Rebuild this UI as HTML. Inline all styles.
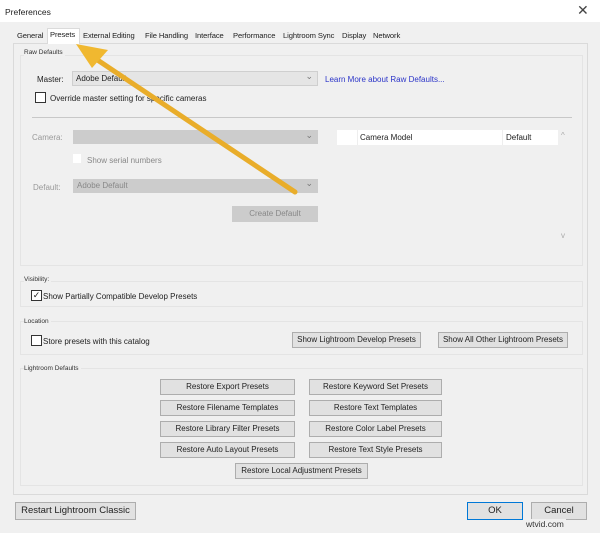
<!DOCTYPE html><html><head><style>
*{margin:0;padding:0;box-sizing:border-box}
body{width:600px;height:533px;background:#f0f0f0;font-family:"Liberation Sans",sans-serif;font-size:9px;color:#222;position:relative;overflow:hidden}
.a{position:absolute;white-space:nowrap}
.btn{position:absolute;background:#e1e1e1;border:1px solid #adadad;text-align:center;font-size:8px;line-height:14px;color:#222}
.grp{position:absolute;border:1px solid #e4e4e4;background:#f0f0f0}
.cb{position:absolute;width:11px;height:11px;border:1px solid #333;background:#fff}
.lbl{position:absolute;font-size:6.5px;color:#333;background:#f0f0f0;padding-right:2px}
.dd{position:absolute;background:#e5e5e5;border:1px solid #cfcfcf;font-size:8px;line-height:14px;padding-left:3px}
.dd:after{content:"⌄";position:absolute;right:4px;top:-3px;color:#777;font-size:9px}
.tab{position:absolute;top:31px;font-size:7.6px;letter-spacing:-0.1px}
</style></head><body>
<div class="a" style="left:0;top:0;width:600px;height:22px;background:#fff"></div>
<div class="a" style="left:5px;top:7px;font-size:8.5px">Preferences</div>
<div class="a" style="left:577px;top:2px;font-size:14px;color:#444">✕</div>
<div class="a" style="left:13px;top:43px;width:575px;height:452px;border:1px solid #dadada;background:#f0f0f0"></div>
<div class="a" style="left:47px;top:28px;width:33px;height:16px;background:#fff;border:1px solid #dadada;border-bottom:none"></div>
<div class="tab" style="left:17px">General</div>
<div class="tab" style="left:50px;top:30px">Presets</div>
<div class="tab" style="left:83px">External Editing</div>
<div class="tab" style="left:145px">File Handling</div>
<div class="tab" style="left:195px">Interface</div>
<div class="tab" style="left:233px">Performance</div>
<div class="tab" style="left:283px">Lightroom Sync</div>
<div class="tab" style="left:342px">Display</div>
<div class="tab" style="left:373px">Network</div>

<div class="grp" style="left:20px;top:55px;width:563px;height:211px"></div>
<div class="lbl" style="left:24px;top:49px">Raw Defaults</div>
<div class="a" style="left:37px;top:75px;font-size:8px">Master:</div>
<div class="dd" style="left:72px;top:71px;width:246px;height:15px">Adobe Default</div>
<div class="a" style="left:325px;top:75px;font-size:8px;color:#2b34c8">Learn More about Raw Defaults...</div>
<div class="cb" style="left:35px;top:92px"></div>
<div class="a" style="left:50px;top:94px;font-size:8px">Override master setting for specific cameras</div>
<div class="a" style="left:32px;top:117px;width:540px;height:1px;background:#c8c8c8"></div>
<div class="a" style="left:32px;top:133px;font-size:8px;color:#999">Camera:</div>
<div class="dd" style="left:73px;top:130px;width:245px;height:14px;background:#ccc;border-color:#ccc"></div>
<div class="cb" style="left:73px;top:154px;width:8px;height:9px;border:none"></div>
<div class="a" style="left:87px;top:156px;font-size:8px;color:#888">Show serial numbers</div>
<div class="a" style="left:33px;top:183px;font-size:8px;color:#999">Default:</div>
<div class="dd" style="left:73px;top:179px;width:245px;height:14px;background:#ccc;border-color:#ccc;color:#888;line-height:12px">Adobe Default</div>
<div class="btn" style="left:232px;top:206px;width:86px;height:16px;background:#ccc;border-color:#ccc;color:#888">Create Default</div>
<div class="a" style="left:337px;top:130px;width:221px;height:15px;background:#fff"></div>
<div class="a" style="left:357px;top:130px;width:1px;height:15px;background:#eee"></div>
<div class="a" style="left:502px;top:130px;width:1px;height:15px;background:#eee"></div>
<div class="a" style="left:360px;top:133px;font-size:8px">Camera Model</div>
<div class="a" style="left:506px;top:133px;font-size:8px">Default</div>
<div class="a" style="left:561px;top:131px;font-size:8px;color:#aaa">^</div>
<div class="a" style="left:561px;top:231px;font-size:8px;color:#aaa">v</div>

<div class="grp" style="left:20px;top:281px;width:563px;height:26px"></div>
<div class="lbl" style="left:24px;top:276px">Visibility:</div>
<div class="cb" style="left:31px;top:290px;font-size:9px;line-height:9px;text-align:center">✓</div>
<div class="a" style="left:43px;top:292px;font-size:8px">Show Partially Compatible Develop Presets</div>

<div class="grp" style="left:20px;top:321px;width:563px;height:34px"></div>
<div class="lbl" style="left:24px;top:318px">Location</div>
<div class="cb" style="left:31px;top:335px"></div>
<div class="a" style="left:43px;top:337px;font-size:8px">Store presets with this catalog</div>
<div class="btn" style="left:292px;top:332px;width:129px;height:16px">Show Lightroom Develop Presets</div>
<div class="btn" style="left:438px;top:332px;width:130px;height:16px">Show All Other Lightroom Presets</div>

<div class="grp" style="left:20px;top:368px;width:563px;height:118px"></div>
<div class="lbl" style="left:24px;top:365px">Lightroom Defaults</div>
<div class="btn" style="left:160px;top:379px;width:135px;height:16px">Restore Export Presets</div>
<div class="btn" style="left:309px;top:379px;width:133px;height:16px">Restore Keyword Set Presets</div>
<div class="btn" style="left:160px;top:400px;width:135px;height:16px">Restore Filename Templates</div>
<div class="btn" style="left:309px;top:400px;width:133px;height:16px">Restore Text Templates</div>
<div class="btn" style="left:160px;top:421px;width:135px;height:16px">Restore Library Filter Presets</div>
<div class="btn" style="left:309px;top:421px;width:133px;height:16px">Restore Color Label Presets</div>
<div class="btn" style="left:160px;top:442px;width:135px;height:16px">Restore Auto Layout Presets</div>
<div class="btn" style="left:309px;top:442px;width:133px;height:16px">Restore Text Style Presets</div>
<div class="btn" style="left:235px;top:463px;width:133px;height:16px">Restore Local Adjustment Presets</div>

<div class="btn" style="left:15px;top:502px;width:121px;height:18px;font-size:9.5px;line-height:16px">Restart Lightroom Classic</div>
<div class="btn" style="left:467px;top:502px;width:56px;height:18px;font-size:9.5px;line-height:16px;border:1px solid #0078d7">OK</div>
<div class="btn" style="left:531px;top:502px;width:56px;height:18px;font-size:9.5px;line-height:16px">Cancel</div>
<div class="a" style="left:524px;top:519px;font-size:8.5px;color:#333;background:#f0f0f0;padding:0 2px">wtvid.com</div>

<svg class="a" style="left:0;top:0" width="600" height="533">
<line x1="295" y1="192" x2="90" y2="55" stroke="#e9ad2a" stroke-width="5" stroke-linecap="round"/>
<polygon points="76,44 108,50 92,68" fill="#f0b830"/>
</svg>
</body></html>
